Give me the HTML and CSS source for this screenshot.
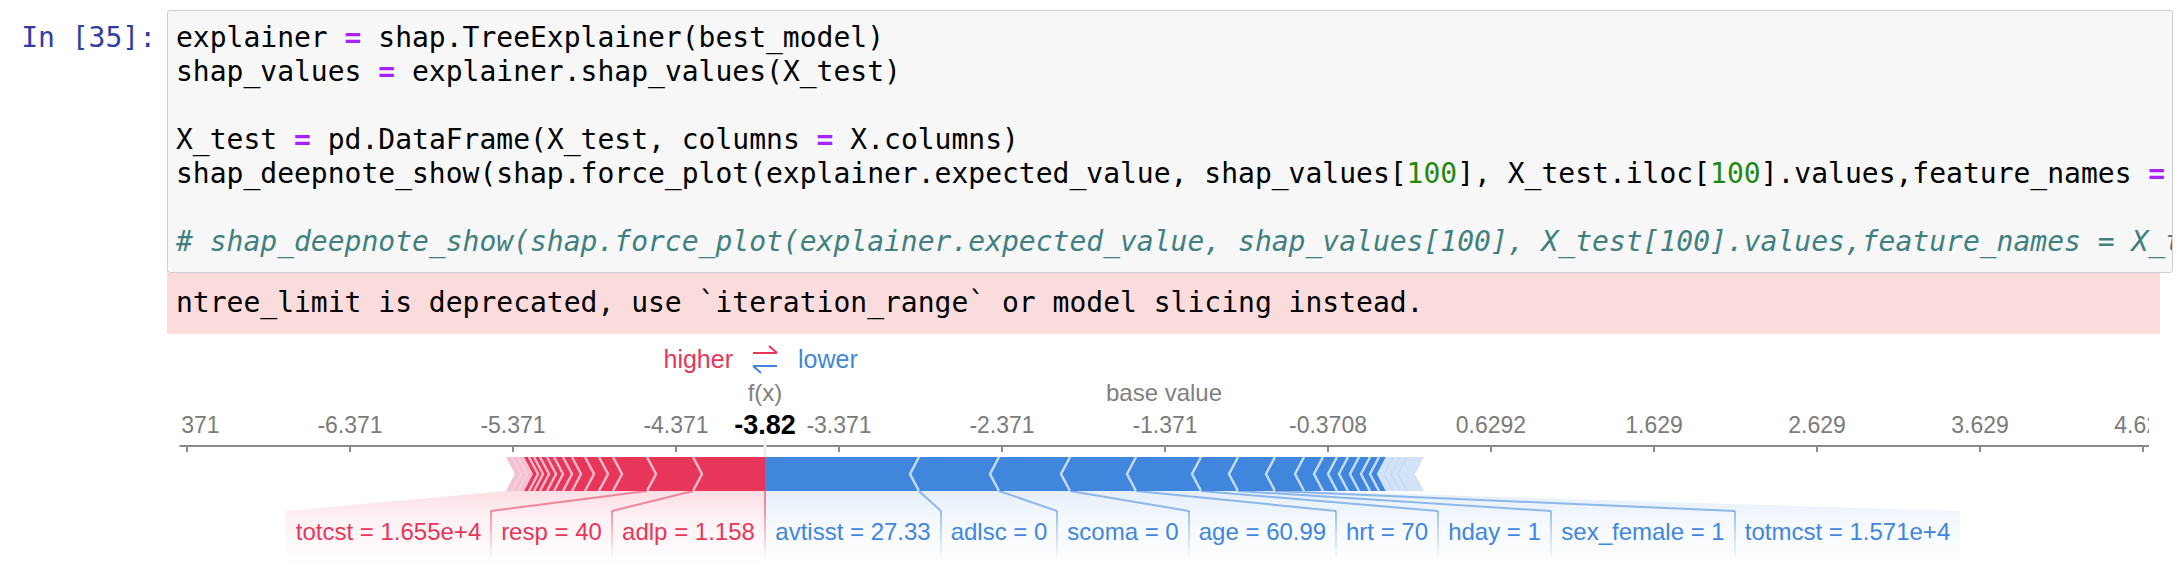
FILE: index.html
```html
<!DOCTYPE html>
<html>
<head>
<meta charset="utf-8">
<title>Notebook cell</title>
<link rel="stylesheet" href="styles.css">
</head>
<body>
<div class="notebook">
  <div class="row">
    <div class="prompt">In&nbsp;[35]:</div>
    <div class="input-area"><pre class="code">explainer <span class="op">=</span> shap.TreeExplainer(best_model)
shap_values <span class="op">=</span> explainer.shap_values(X_test)

X_test <span class="op">=</span> pd.DataFrame(X_test, columns <span class="op">=</span> X.columns)
shap_deepnote_show(shap.force_plot(explainer.expected_value, shap_values[<span class="num">100</span>], X_test.iloc[<span class="num">100</span>].values,feature_names <span class="op">=</span> X.columns))

<span class="cm"># shap_deepnote_show(shap.force_plot(explainer.expected_value, shap_values[100], X_test[100].values,feature_names = X_test.columns))</span></pre></div>
  </div>
  <div class="row">
    <div class="out-prompt"></div>
    <div class="stderr">ntree_limit is deprecated, use `iteration_range` or model slicing instead.</div>
  </div>
  <div class="row">
    <div class="out-prompt"></div>
    <div class="plot">
      <svg class="force" width="1993" height="254" viewBox="167 334 1993 254">
        <defs>
          <clipPath id="axis-clip"><rect x="179.5" y="334" width="1969.5" height="254"/></clipPath>
          <linearGradient id="fade-red" gradientUnits="userSpaceOnUse" x1="0" y1="491" x2="0" y2="566">
            <stop offset="0" stop-color="#e8355a" stop-opacity="0.16"/>
            <stop offset="0.35" stop-color="#e8355a" stop-opacity="0.07"/>
            <stop offset="1" stop-color="#e8355a" stop-opacity="0"/>
          </linearGradient>
          <linearGradient id="fade-blue" gradientUnits="userSpaceOnUse" x1="0" y1="491" x2="0" y2="566">
            <stop offset="0" stop-color="#3f86dc" stop-opacity="0.14"/>
            <stop offset="0.35" stop-color="#3f86dc" stop-opacity="0.06"/>
            <stop offset="1" stop-color="#3f86dc" stop-opacity="0"/>
          </linearGradient>
          <linearGradient id="line-red" gradientUnits="userSpaceOnUse" x1="0" y1="505" x2="0" y2="560">
            <stop offset="0" stop-color="#e8355a" stop-opacity="0.55"/>
            <stop offset="1" stop-color="#e8355a" stop-opacity="0"/>
          </linearGradient>
          <linearGradient id="line-blue" gradientUnits="userSpaceOnUse" x1="0" y1="505" x2="0" y2="560">
            <stop offset="0" stop-color="#3f86dc" stop-opacity="0.55"/>
            <stop offset="1" stop-color="#3f86dc" stop-opacity="0"/>
          </linearGradient>
        </defs>

        <text class="dir red-text" x="733" y="368" text-anchor="end">higher</text>
        <path class="arrow red-stroke" d="M753 353H777M769 346L777 353"/>
        <path class="arrow blue-stroke" d="M753 366H777M753 366L761 373"/>
        <text class="dir blue-text" x="798" y="368">lower</text>

        <text class="caption" x="765" y="401" text-anchor="middle">f(x)</text>
        <text class="caption" x="1164" y="401" text-anchor="middle">base value</text>

        <g clip-path="url(#axis-clip)">
          <line class="axis" x1="170" y1="446" x2="2170" y2="446"/>
          <path class="axis" d="M187 446V452M350 446V452M513 446V452M676 446V452M839 446V452M1002 446V452M1165 446V452M1328 446V452M1491 446V452M1654 446V452M1817 446V452M1980 446V452M2143 446V452"/>
          <text class="tick" x="187" y="433">-7.371</text>
          <text class="tick" x="350" y="433">-6.371</text>
          <text class="tick" x="513" y="433">-5.371</text>
          <text class="tick" x="676" y="433">-4.371</text>
          <text class="tick" x="839" y="433">-3.371</text>
          <text class="tick" x="1002" y="433">-2.371</text>
          <text class="tick" x="1165" y="433">-1.371</text>
          <text class="tick" x="1328" y="433">-0.3708</text>
          <text class="tick" x="1491" y="433">0.6292</text>
          <text class="tick" x="1654" y="433">1.629</text>
          <text class="tick" x="1817" y="433">2.629</text>
          <text class="tick" x="1980" y="433">3.629</text>
          <text class="tick" x="2143" y="433">4.629</text>
        </g>
        <line class="join" x1="765" y1="438" x2="765" y2="457"/>
        <text class="fx-outline" x="765" y="434">-3.82</text>
        <text class="fx" x="765" y="434">-3.82</text>

        <polygon fill="url(#fade-red)" points="765,491 506,491 286,511 286,566 765,566"/>
        <polygon fill="url(#fade-blue)" points="765,491 1304,491 1960,511 1960,566 765,566"/>

        <polygon class="pale-red" points="506,457 524,457 533,474 524,491 506,491 515,474"/>
        <polygon class="red-fill" points="524,457 765,457 765,491 524,491 533,474"/>
        <polygon class="blue-fill" points="765,457 1386,457 1377,474 1386,491 765,491"/>
        <polygon class="pale-blue" points="1386,457 1424,457 1415,474 1424,491 1386,491 1377,474"/>

        <path class="chev-red" d="M693 457L702 474L693 491M647 457L656 474L647 491M613 457L622 474L613 491M599 457L608 474L599 491M585 457L594 474L585 491M572 457L581 474L572 491M563 457L572 474L563 491M554 457L563 474L554 491M547 457L556 474L547 491M540 457L549 474L540 491M534 457L543 474L534 491M529 457L538 474L529 491"/>
        <path class="chev-pale-red" d="M512 457L521 474L512 491M518 457L527 474L518 491"/>
        <path class="chev-blue" d="M919 457L910 474L919 491M999 457L990 474L999 491M1070 457L1061 474L1070 491M1136 457L1127 474L1136 491M1201 457L1192 474L1201 491M1238 457L1229 474L1238 491M1275 457L1266 474L1275 491M1304 457L1295 474L1304 491M1323 457L1314 474L1323 491M1337 457L1328 474L1337 491M1348 457L1339 474L1348 491M1359 457L1350 474L1359 491M1370 457L1361 474L1370 491M1379 457L1370 474L1379 491"/>
        <path class="chev-pale-blue" d="M1393 457L1384 474L1393 491M1400 457L1391 474L1400 491M1407 457L1398 474L1407 491"/>

        <path class="link red-stroke" d="M647 491L491 511M693 491L612 511"/>
        <path class="drop-red" d="M491 511V560M612 511V560M765 491V560"/>
        <path class="link blue-stroke" d="M919 491L941 511M999 491L1057 511M1070 491L1189 511M1136 491L1336 511M1201 491L1438 511M1238 491L1551 511M1275 491L1735 511"/>
        <path class="drop-blue" d="M941 511V560M1057 511V560M1189 511V560M1336 511V560M1438 511V560M1551 511V560M1735 511V560"/>

        <text class="lab red-text" x="388.5" y="540">totcst = 1.655e+4</text>
        <text class="lab red-text" x="551.5" y="540">resp = 40</text>
        <text class="lab red-text" x="688.5" y="540">adlp = 1.158</text>
        <text class="lab blue-text" x="853" y="540">avtisst = 27.33</text>
        <text class="lab blue-text" x="999" y="540">adlsc = 0</text>
        <text class="lab blue-text" x="1123" y="540">scoma = 0</text>
        <text class="lab blue-text" x="1262.5" y="540">age = 60.99</text>
        <text class="lab blue-text" x="1387" y="540">hrt = 70</text>
        <text class="lab blue-text" x="1494.5" y="540">hday = 1</text>
        <text class="lab blue-text" x="1643" y="540">sex_female = 1</text>
        <text class="lab blue-text" x="1847.5" y="540">totmcst = 1.571e+4</text>
      </svg>
    </div>
  </div>
</div>
</body>
</html>
```

FILE: styles.css
```css
* { box-sizing: border-box; }
html, body { margin: 0; padding: 0; background: #ffffff; }
body { width: 2182px; height: 588px; overflow: hidden; }

.notebook { padding-top: 10px; }
.row { display: flex; }

.prompt {
  width: 167px;
  flex: none;
  padding: 11px 11px 0 0;
  text-align: right;
  font: 28px/34px "DejaVu Sans Mono", monospace;
  color: #303F9F;
}
.out-prompt { width: 167px; flex: none; }

.input-area {
  width: 2006px;
  height: 263px;
  flex: none;
  border: 1px solid #cfcfcf;
  border-radius: 3px;
  background: #f7f7f7;
  padding: 10px 0 0 8px;
  overflow: hidden;
}
.code {
  margin: 0;
  font: 28px/34px "DejaVu Sans Mono", monospace;
  color: #000;
  white-space: pre;
}
.op { color: #AA22FF; font-weight: bold; }
.num { color: #228811; }
.cm { color: #408080; font-style: italic; }

.stderr {
  width: 1993px;
  flex: none;
  background: #fadcdc;
  padding: 13px 9px 14px;
  font: 28px/34px "DejaVu Sans Mono", monospace;
  color: #000;
  white-space: pre;
}

.plot { width: 1993px; height: 254px; flex: none; }
.force { display: block; }
.force text { font-family: "Liberation Sans", Arial, sans-serif; }

.red-text { fill: #e8355a; }
.blue-text { fill: #3f86dc; }
.red-stroke { stroke: #e8355a; }
.blue-stroke { stroke: #3f86dc; }

.dir { font-size: 25px; }
.arrow { fill: none; stroke-width: 2; }
.caption { font-size: 24px; fill: #808080; }
.tick { font-size: 23px; fill: #7b7b7b; text-anchor: middle; }
.axis { stroke: #8a8a8a; stroke-width: 2; fill: none; }
.join { stroke: #efefef; stroke-width: 3; }
.fx, .fx-outline { font-size: 27px; font-weight: bold; text-anchor: middle; }
.fx { fill: #000; }
.fx-outline { fill: #fff; stroke: #fff; stroke-width: 8; stroke-linejoin: round; }

.red-fill { fill: #e8355a; }
.blue-fill { fill: #3f86dc; }
.pale-red { fill: #f4c1d1; }
.pale-blue { fill: #d2e3f7; }
.chev-red { fill: none; stroke: #f5b8c8; stroke-width: 2.5; }
.chev-pale-red { fill: none; stroke: #f7d4de; stroke-width: 1.5; }
.chev-blue { fill: none; stroke: #c4dbf5; stroke-width: 2.5; }
.chev-pale-blue { fill: none; stroke: #bdd5f2; stroke-width: 1; }

.link { fill: none; stroke-width: 2; opacity: 0.55; }
.drop-red { fill: none; stroke: url(#line-red); stroke-width: 2; }
.drop-blue { fill: none; stroke: url(#line-blue); stroke-width: 2; }
.lab { font-size: 24px; text-anchor: middle; }
```
